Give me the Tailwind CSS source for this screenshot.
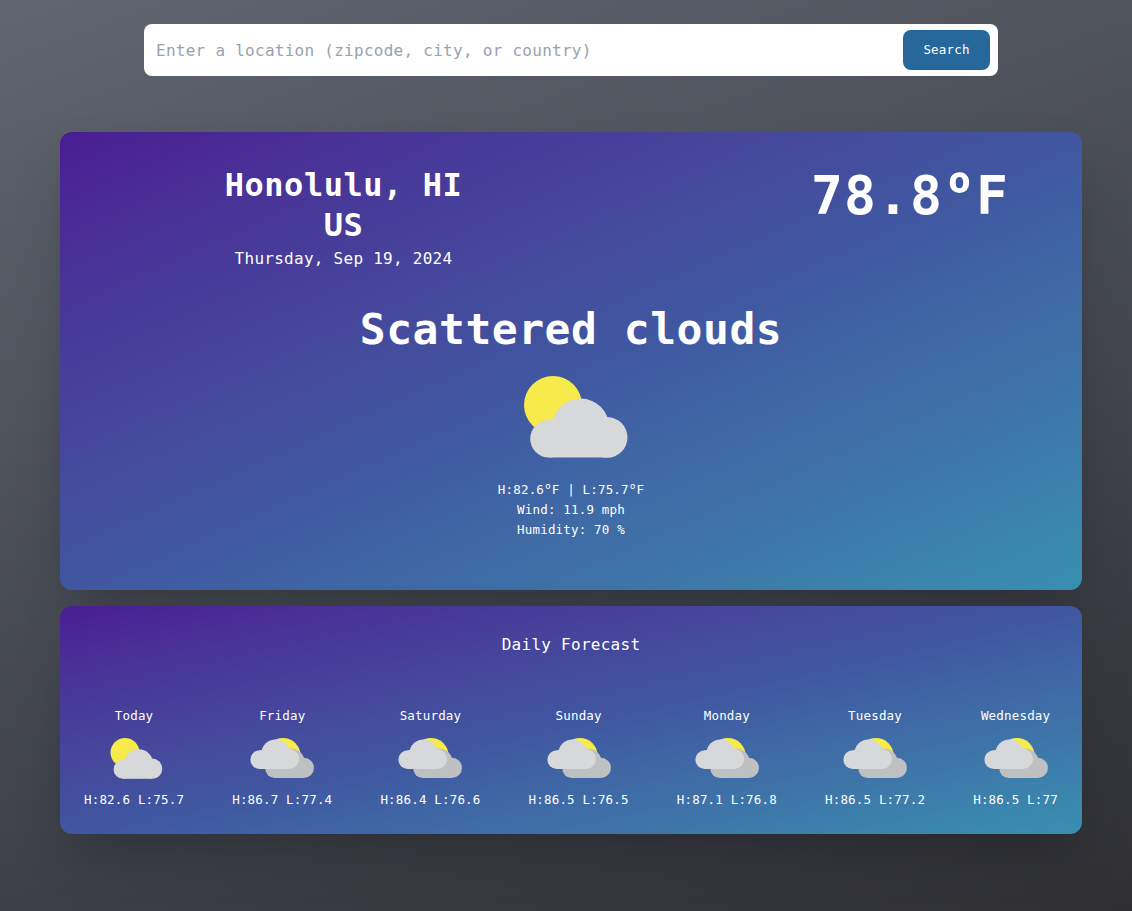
<!DOCTYPE html>
<html lang="en">
<head>
<meta charset="utf-8">
<title>Weather</title>
<script src="https://cdn.jsdelivr.net/npm/@tailwindcss/browser@4"></script>
</head>
<body class="h-[911px] overflow-hidden bg-[linear-gradient(160deg,#61656f_0%,#3d4048_68%,#2f2f33_100%)] font-['DejaVu_Sans_Mono',monospace] text-white">
<svg class="hidden">
  <defs>
    <g id="cloud"><circle cx="21" cy="43.4" r="9.4"/><circle cx="36.8" cy="37.5" r="14.25"/><circle cx="50.1" cy="42.7" r="10.15"/><path d="M21 34H50V52.8H21Z"/></g>
    <symbol id="scattered" viewBox="0 0 64 64"><circle cx="23" cy="26.5" r="14.5" fill="#f7ea4b"/><use href="#cloud" fill="#d6d8da"/></symbol>
    <symbol id="broken" viewBox="0 0 64 64"><circle cx="33" cy="29.6" r="17.6" fill="#f7ea4b"/><use href="#cloud" x="3.7" y="-.8" fill="#bec0c2"/><use href="#cloud" x="-11.2" y="-9.8" fill="#d6d8da"/></symbol>
  </defs>
</svg>
<form class="ml-36 mt-6 flex h-[52px] w-[854px] items-center rounded-lg bg-white pl-3 pr-2">
  <input type="text" placeholder="Enter a location (zipcode, city, or country)" class="min-w-0 flex-1 pt-0.5 text-[16px] tracking-[0.268px] text-gray-700 outline-none placeholder:text-gray-400">
  <button type="button" class="h-10 w-[87px] rounded-lg bg-[#26679c] text-[12.5px] tracking-[0.175px]">Search</button>
</form>
<main class="ml-[60px] mt-14 flex w-[1022px] flex-col gap-4 text-center">
  <section class="h-[458px] rounded-xl bg-linear-to-br from-[#4a1d92] via-[#4056a0] to-[#388fb0] pt-[33px] shadow-2xl">
    <div class="flex justify-between">
      <div class="w-[567px]">
        <h1 class="text-[32px] leading-10 font-bold tracking-[0.535px]">Honolulu, HI<br>US</h1>
        <p class="text-[16px] leading-7 tracking-[0.268px]">Thursday, Sep 19, 2024</p>
      </div>
      <p class="-mt-0.5 w-[344px] text-[53px] leading-[60px] font-bold tracking-[1.09px]">78.8<span class="inline-block w-[33px] text-center font-['Noto_Sans'] text-[58px] leading-none tracking-normal">º</span>F</p>
    </div>
    <h2 class="mt-8 text-[43px] leading-[48px] font-bold tracking-[0.51px]">Scattered clouds</h2>
    <svg class="mx-auto -mt-px size-32"><use href="#scattered"/></svg>
    <div class="text-[12.5px] leading-5 tracking-[0.175px]">
      <p>H:82.6<span class="inline-block w-[7.7px] text-center font-['Noto_Sans'] text-[14px] leading-none tracking-normal">º</span>F | L:75.7<span class="inline-block w-[7.7px] text-center font-['Noto_Sans'] text-[14px] leading-none tracking-normal">º</span>F</p>
      <p>Wind: 11.9 mph</p>
      <p>Humidity: 70 %</p>
    </div>
  </section>
  <section class="h-[228px] rounded-xl bg-linear-to-br from-[#4a1d92] via-[#4056a0] to-[#388fb0] p-6 shadow-2xl">
    <h3 class="pt-px text-[16px] leading-7 tracking-[0.268px]">Daily Forecast</h3>
    <div class="mt-[47px] flex justify-between text-[12.5px] leading-5 tracking-[0.175px]">
      <div><p>Today</p><svg class="mx-auto size-16"><use href="#scattered"/></svg><p>H:82.6 L:75.7</p></div>
      <div><p>Friday</p><svg class="mx-auto size-16"><use href="#broken"/></svg><p>H:86.7 L:77.4</p></div>
      <div><p>Saturday</p><svg class="mx-auto size-16"><use href="#broken"/></svg><p>H:86.4 L:76.6</p></div>
      <div><p>Sunday</p><svg class="mx-auto size-16"><use href="#broken"/></svg><p>H:86.5 L:76.5</p></div>
      <div><p>Monday</p><svg class="mx-auto size-16"><use href="#broken"/></svg><p>H:87.1 L:76.8</p></div>
      <div><p>Tuesday</p><svg class="mx-auto size-16"><use href="#broken"/></svg><p>H:86.5 L:77.2</p></div>
      <div><p>Wednesday</p><svg class="mx-auto size-16"><use href="#broken"/></svg><p>H:86.5 L:77</p></div>
    </div>
  </section>
</main>
</body>
</html>
